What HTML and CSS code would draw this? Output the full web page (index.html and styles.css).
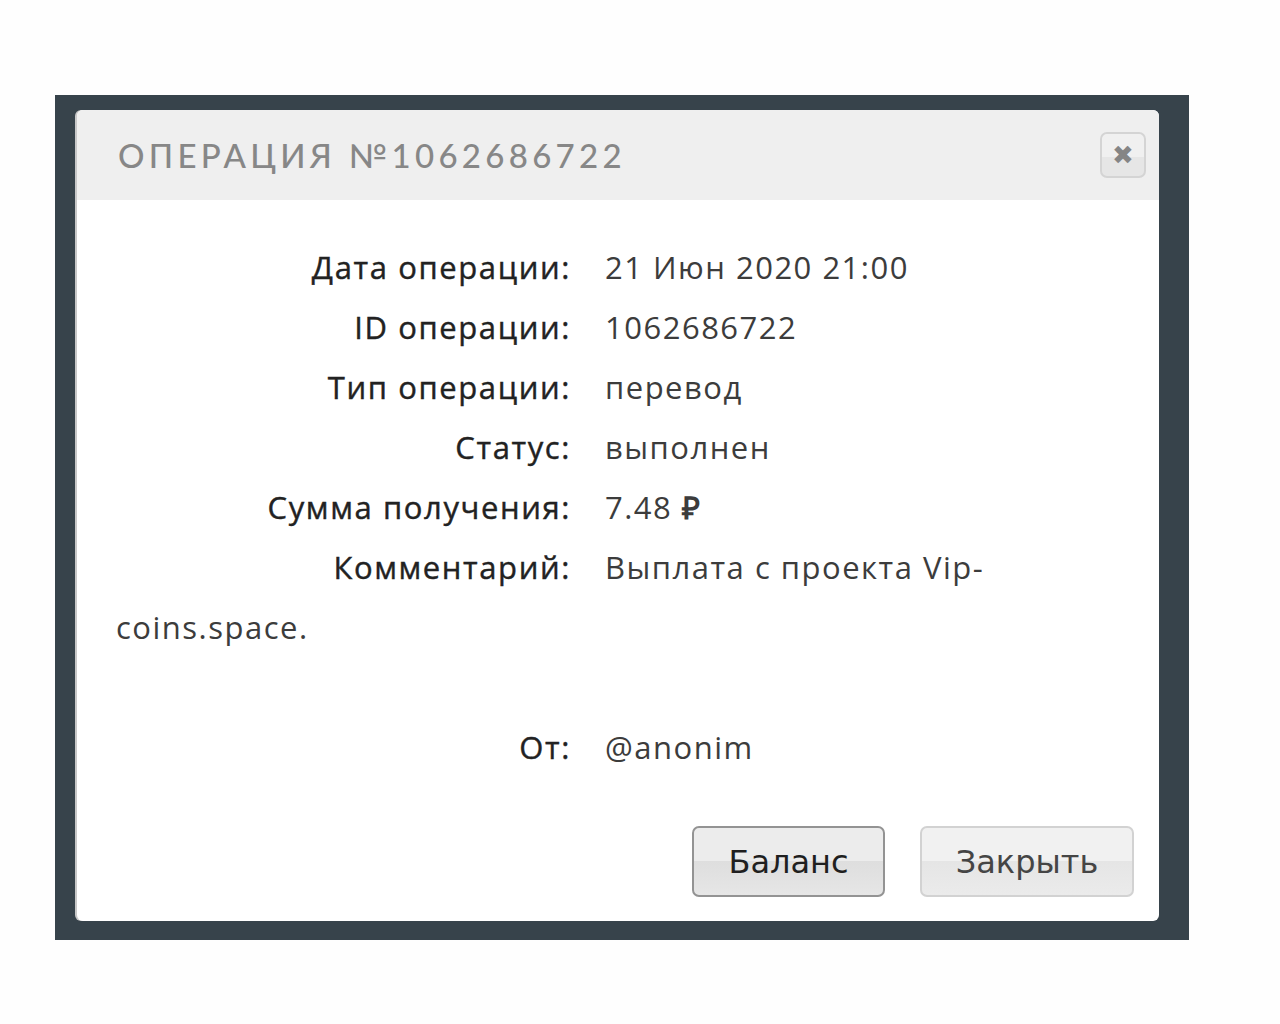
FILE: index.html
```html
<!DOCTYPE html>
<html lang="ru">
<head>
    <meta charset="UTF-8">
    <meta name="viewport" content="width=device-width, initial-scale=1.0">
    <title>Операция №1062686722</title>
    <link rel="stylesheet" href="styles.css">
</head>
<body>
    <div class="overlay">
        <div class="modal">
            <div class="modal-header">
                <h2>Операция №1062686722</h2>
                <button class="close-x">&#10006;</button>
            </div>
            <div class="modal-body">
                <div class="row"><span class="label">Дата операции:</span><span class="value">21 Июн 2020 21:00</span></div>
                <div class="row"><span class="label">ID операции:</span><span class="value">1062686722</span></div>
                <div class="row"><span class="label">Тип операции:</span><span class="value">перевод</span></div>
                <div class="row"><span class="label">Статус:</span><span class="value">выполнен</span></div>
                <div class="row"><span class="label">Сумма получения:</span><span class="value">7.48 <b>&#8381;</b></span></div>
                <div class="row"><span class="label">Комментарий:</span><span class="value">Выплата с проекта Vip-coins.space.</span><br><br></div>
                <div class="row"><span class="label">От:</span><span class="value">@anonim</span></div>
            </div>
            <div class="modal-footer">
                <button class="btn btn-dark">Баланс</button>
                <button class="btn btn-close">Закрыть</button>
            </div>
        </div>
    </div>
</body>
</html>
```

FILE: styles.css
```css
body {
    margin: 0;
    padding: 0;
    background-color: #fefefe;
    font-family: "Open Sans", Arial, sans-serif;
}

.overlay {
    width: 1134px;
    height: 845px;
    margin: 95px 0 0 55px;
    padding: 15px 30px 19px 22px;
    box-sizing: border-box;
    background-color: #37434b;
}

.modal {
    width: 1082px;
    height: 811px;
    background: #fff;
    border-radius: 6px;
    box-shadow: -2px 0 0 #c8c8c8;
    overflow: hidden;
}

.modal-header {
    height: 90px;
    background-color: #efefef;
    display: flex;
    align-items: center;
    justify-content: space-between;
    padding: 0 13px 0 41px;
}

.modal-header h2 {
    margin: 0;
    font-family: "Lato", sans-serif;
    font-weight: 500;
    font-size: 33px;
    letter-spacing: 4.3px;
    text-transform: uppercase;
    color: #878787;
}

.close-x {
    width: 46px;
    height: 46px;
    border: 2px solid #d4d4d4;
    border-radius: 7px;
    background: linear-gradient(#f0f0f0 55%, #e6e6e6 55%);
    color: #858585;
    font-size: 26px;
    line-height: 1;
    padding: 0;
    font-family: "DejaVu Sans", sans-serif;
}

.modal-body {
    padding: 37px 40px 0 39px;
    font-size: 31px;
    line-height: 60px;
    letter-spacing: 1.5px;
    color: #3c3c3c;
}

.label {
    display: inline-block;
    width: 455px;
    text-align: right;
    margin-right: 34px;
    font-weight: 500;
    letter-spacing: 1.6px;
    color: #222;
    -webkit-text-stroke: 0.4px #222;
}

.value b {
    font-weight: 700;
}

.modal-footer {
    display: flex;
    justify-content: flex-end;
    gap: 35px;
    padding: 49px 25px 0 0;
}

.btn {
    width: 193px;
    height: 71px;
    padding: 0;
    border: 2px solid #d2d2d2;
    border-radius: 7px;
    background: linear-gradient(#f1f1f1 50%, #e5e5e5 50%, #ebebeb);
    font-family: "DejaVu Sans", Tahoma, sans-serif;
    font-size: 32px;
    color: #454545;
}

.btn-dark {
    border-color: #939393;
    color: #1f1f1f;
    background: linear-gradient(#ececec 50%, #dedede 50%, #e6e6e6);
}

.btn-close {
    width: 214px;
}
```
